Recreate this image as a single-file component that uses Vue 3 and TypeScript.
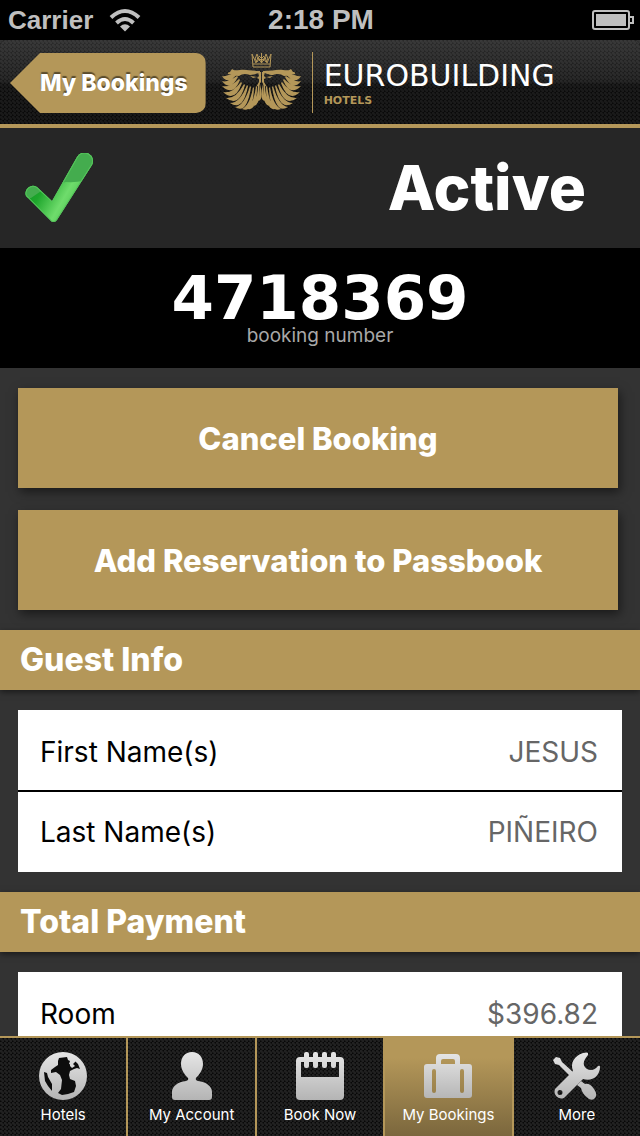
<script setup lang="ts">
interface Row {
  label: string
  value: string
}

interface Section {
  title: string
  rows: Row[]
}

interface Tab {
  id: string
  label: string
}

type Point = [number, number]

const sections: Section[] = [
  {
    title: 'Guest Info',
    rows: [
      { label: 'First Name(s)', value: 'JESUS' },
      { label: 'Last Name(s)', value: 'PIÑEIRO' },
    ],
  },
  {
    title: 'Total Payment',
    rows: [{ label: 'Room', value: '$396.82' }],
  },
]

const tabs: Tab[] = [
  { id: 'hotels', label: 'Hotels' },
  { id: 'account', label: 'My Account' },
  { id: 'book', label: 'Book Now' },
  { id: 'bookings', label: 'My Bookings' },
  { id: 'more', label: 'More' },
]

const activeTab = 'bookings'

// Each strand of the mane runs from the head through a bend to its tip.
const strands: [Point, Point, Point][] = [
  [[15, 20], [5, 29], [0, 24]],
  [[15, 24], [7, 35], [0, 29]],
  [[17, 27], [10, 40], [0, 34]],
  [[19, 30], [12, 46], [1, 40]],
  [[22, 32], [16, 51], [4, 46]],
  [[25, 33], [20, 55], [8, 51]],
  [[28, 34], [24, 58], [13, 55]],
  [[31, 35], [30, 57], [20, 57]],
  [[34, 34], [34, 54], [26, 57]],
  [[36, 32], [38, 49], [31, 54]],
  [[37, 31], [41, 43], [36, 49]],
]

const mane = strands
  .map(([r, c, t]) => `M${r[0]} ${r[1]}Q${c[0] - 2} ${c[1] - 4} ${t[0]} ${t[1]}Q${c[0] + 1} ${c[1] + 5} ${r[0] + 1} ${r[1] + 1}Z`)
  .join('')
</script>

<template>
  <div class="screen">
    <div class="status-bar">
      <div class="carrier">
        <span>Carrier</span>
        <svg width="32" height="24" viewBox="0 0 32 24" aria-hidden="true">
          <g fill="none" stroke="#bfbfbf" stroke-width="4">
            <path d="M2 9.5Q16 -3.5 30 9.5" />
            <path d="M7.500 15Q16 7 24.500 15" />
          </g>
          <path d="M11 18.500Q16 14 21 18.500L16 23.500Z" fill="#bfbfbf" />
        </svg>
      </div>
      <span>2:18 PM</span>
      <div class="power">
        <svg width="42" height="20" viewBox="0 0 42 20" aria-hidden="true">
          <rect x="1" y="1" width="36" height="18" rx="2" fill="none" stroke="#bfbfbf" stroke-width="2" />
          <rect x="4" y="4" width="30" height="12" fill="#bfbfbf" />
          <path d="M38 7h3v6h-3" fill="none" stroke="#bfbfbf" stroke-width="2" />
        </svg>
      </div>
    </div>

    <header class="nav-bar carbon">
      <button class="back" type="button">My Bookings</button>
      <svg class="crest" width="92" height="62" viewBox="0 0 92 62" aria-hidden="true">
        <defs>
          <g id="lion">
            <path :d="mane" />
            <path d="M10 17C12 19 15 18 18 18C24 17 29 19 38 19V21C34 21 33 23 28 23C23 21 20 22 17 24C13 24 10 23 8 22C5 23 5 20 8 20Z" />
            <path d="M36 20H39V30L37 33L34 35L37 30V27L35 26L37 24Z" />
            <path d="M28 24L35 25L31 26Z" />
          </g>
        </defs>
        <g fill="#b49759">
          <use href="#lion" />
          <use href="#lion" transform="translate(79 0) scale(-1 1)" />
          <rect x="90" y="0" width="1" height="61" />
        </g>
        <g fill="none" stroke="#b49759" stroke-width="1">
          <path d="M30 2L31 15H48L49 2L45 11L43 5L39.500 11L36 5L34 11Z" />
          <path d="M31 12H48M35 2L33 7L35 10L37 7ZM44 2L42 7L44 10L46 7ZM39.500 1V11M37 4L42 9M42 4L37 9" />
        </g>
      </svg>
      <div class="wordmark">
        <span class="brand">EUROBUILDING</span>
        <span class="brand-sub">HOTELS</span>
      </div>
    </header>

    <main class="content">
      <section class="state">
        <svg width="70" height="70" viewBox="0 0 70 70" aria-hidden="true">
          <defs>
            <linearGradient id="tick" x1="0" y1="0.500" x2="0.700" y2="0.900">
              <stop offset="0" stop-color="#0d9a20" />
              <stop offset="0.300" stop-color="#1ea62c" />
              <stop offset="0.700" stop-color="#6fdc6c" />
              <stop offset="1" stop-color="#4cc44f" />
            </linearGradient>
            <clipPath id="tick-shape">
              <path d="M2 43A7.500 7.500 0 0 1 13 34L28 48L53 4A8 8 0 0 1 68 12L33 67A4 4 0 0 1 26 67Z" />
            </clipPath>
          </defs>
          <g clip-path="url(#tick-shape)">
            <rect width="70" height="70" fill="url(#tick)" />
            <path d="M0 0H70V24Q60 30 42 29Q24 32 7 45L0 45Z" fill="#44ac4e" />
            <path d="M2 43A7.500 7.500 0 0 1 13 34L28 48L53 4A8 8 0 0 1 68 12L33 67A4 4 0 0 1 26 67Z" fill="none" stroke="#55c45b" stroke-width="2" />
          </g>
        </svg>
        <h1>Active</h1>
      </section>

      <section class="booking">
        <strong>4718369</strong>
        <span>booking number</span>
      </section>

      <div class="actions">
        <button type="button">Cancel Booking</button>
        <button type="button">Add Reservation to Passbook</button>
      </div>

      <section v-for="section in sections" :key="section.title" class="group">
        <h2>{{ section.title }}</h2>
        <dl>
          <div v-for="row in section.rows" :key="row.label" class="row">
            <dt>{{ row.label }}</dt>
            <dd>{{ row.value }}</dd>
          </div>
        </dl>
      </section>
    </main>

    <nav class="tab-bar carbon">
      <a
        v-for="tab in tabs"
        :key="tab.id"
        :href="'#' + tab.id"
        class="tab"
        :class="{ active: tab.id === activeTab }"
        :aria-current="tab.id === activeTab ? 'page' : undefined"
      >
        <svg width="50" height="50" viewBox="-1 -1 50 50" aria-hidden="true">
          <defs>
            <linearGradient :id="'metal-' + tab.id" gradientUnits="userSpaceOnUse" x1="0" y1="0" x2="0" y2="48">
              <stop offset="0" stop-color="#e6e6e6" />
              <stop offset="1" stop-color="#b4b4b4" />
            </linearGradient>
          </defs>
          <g :fill="`url(#metal-${tab.id})`">
            <template v-if="tab.id === 'hotels'">
              <circle cx="24" cy="24" r="24" />
              <path
                fill="#0d0d0d"
                d="M20 6L28 5L29 8L31 9L30 12L33 13L33 10L36 9L39 12L41 17L38 16L35 17L31 19L30 23L31 27L36 29L37 34L35 40L29 42L23 43L19 41L22 37L23 28L21 23L17 20L12 21L12 18L16 15L19 13L19 9ZM5 20L8 21L9 25L13 32L13 39L9 34L6 29Z"
              />
              <path d="M31 11L34 8L37 9L34 12L36 14L33 16L31 14Z" />
            </template>
            <path
              v-else-if="tab.id === 'account'"
              d="M24 0C31 0 35 5 35 12C35 18 31 23 28 26Q27 28 30 29C38 30 44 34 44 40V45Q44 48 41 48H7Q4 48 4 45V40C4 34 10 30 18 29Q21 28 20 26C17 23 13 18 13 12C13 5 17 0 24 0Z"
            />
            <template v-else-if="tab.id === 'book'">
              <path
                fill-rule="evenodd"
                d="M4 5H44Q48 5 48 9V44Q48 48 44 48H4Q0 48 0 44V9Q0 5 4 5ZM5 10V25H43V10Z"
              />
              <rect v-for="x in [8, 17, 26, 35]" :key="x" :x="x" y="0" width="5" height="16" rx="2" />
            </template>
            <path
              v-else-if="tab.id === 'bookings'"
              fill-rule="evenodd"
              d="M12 12V6Q12 2 16 2H32Q36 2 36 6V12H45Q48 12 48 15V43Q48 46 45 46H3Q0 46 0 43V15Q0 12 3 12ZM17 12H31V9Q31 7 29 7H19Q17 7 17 9ZM8 19V39Q8 41 10 41T12 39V19Q12 17 10 17T8 19ZM36 19V39Q36 41 38 41T40 39V19Q40 17 38 17T36 19Z"
            />
            <template v-else>
              <path d="M0 8L3 5L7 6L9 10L20 20L17 24L6 13L2 12Z" />
              <path d="M24 33L28 29L32 32Q37 31 41 37Q45 43 42 46Q40 49 36 47Q29 42 28 36Z" />
              <path
                fill-rule="evenodd"
                d="M35 1Q34 0 30 1C21 4 17 11 20 19L2 37A7 7 0 0 0 11 46L30 27C39 30 47 24 47 15Q47 13 45 14C42 18 38 19 34 17C30 14 29 10 35 3ZM7 38A2.500 2.500 0 1 1 7 43A2.500 2.500 0 1 1 7 38Z"
              />
            </template>
          </g>
        </svg>
        <span>{{ tab.label }}</span>
      </a>
    </nav>
  </div>
</template>

<style>
body {
  margin: 0;
  background: #333;
}
</style>

<style scoped>
.screen {
  display: flex;
  flex-direction: column;
  height: 100vh;
  background: #333;
  color: #fff;
  font-family: Inter, Roboto, sans-serif;
}

.status-bar {
  display: grid;
  grid-template-columns: 1fr auto 1fr;
  align-items: center;
  flex: none;
  height: 40px;
  padding: 0 6px 0 8px;
  background: #000;
  color: #bfbfbf;
  font: bold 28px "Liberation Sans", sans-serif;
}

.carrier {
  display: flex;
  align-items: center;
  gap: 16px;
  font-size: 26px;
}

.power {
  display: flex;
  justify-content: flex-end;
}

.carbon {
  background-color: #080808;
  background-image:
    radial-gradient(circle at 1px 1px, rgba(255, 255, 255, 0.1) 1px, transparent 2px),
    radial-gradient(circle at 3px 3px, rgba(255, 255, 255, 0.1) 1px, transparent 2px);
  background-size: 4px 4px;
}

.nav-bar {
  display: flex;
  align-items: center;
  flex: none;
  box-sizing: border-box;
  height: 88px;
  padding: 2px 10px 0;
  border-bottom: 4px solid #b49759;
  border-radius: 6px 6px 0 0;
  background-image:
    radial-gradient(circle at 1px 1px, rgba(255, 255, 255, 0.07) 1px, transparent 2px),
    radial-gradient(circle at 3px 3px, rgba(255, 255, 255, 0.07) 1px, transparent 2px),
    linear-gradient(#2a2a2a, #181818 48%, #0a0a0a 54%, #080808);
  background-size: 4px 4px, 4px 4px, 100% 100%;
}

.back {
  height: 60px;
  padding: 0 18px 0 30px;
  border: 0;
  border-radius: 0 10px 10px 0;
  background: #b49759;
  clip-path: polygon(0 50%, 30px 0, 100% 0, 100% 100%, 30px 100%);
  color: #fff;
  font: 800 23px Inter, sans-serif;
  text-shadow: 0 -2px 1px rgba(0, 0, 0, 0.5);
}

.crest {
  flex: none;
  margin: 0 10px 0 16px;
}

.wordmark {
  display: flex;
  flex-direction: column;
  font-family: "DejaVu Sans", sans-serif;
}

.brand {
  font-size: 30px;
  line-height: 36px;
}

.brand-sub {
  color: #b49759;
  font: bold 11px/14px "DejaVu Sans", sans-serif;
}

.content {
  flex: 1;
  min-height: 0;
  overflow: hidden;
}

.state {
  display: flex;
  align-items: center;
  justify-content: space-between;
  height: 120px;
  padding: 0 54px 0 24px;
  background: #262626;
}

h1 {
  margin: 0;
  font: 800 62px/76px Inter, sans-serif;
}

.booking {
  display: flex;
  flex-direction: column;
  align-items: center;
  box-sizing: border-box;
  height: 120px;
  padding-top: 14px;
  background: #000;
}

.booking strong {
  font: bold 61px/72px "DejaVu Sans", sans-serif;
}

.booking span {
  margin-top: -10px;
  color: #a8a8a8;
  font-size: 19px;
  line-height: 24px;
}

.actions {
  display: grid;
  gap: 22px;
  padding: 20px 22px 20px 18px;
}

.actions button {
  height: 100px;
  border: 0;
  background: #b49759;
  box-shadow: 2px 4px 10px rgba(0, 0, 0, 0.5);
  color: #fff;
  font: 800 31px Inter, sans-serif;
}

h2 {
  margin: 0;
  padding: 0 20px;
  background: #b49759;
  box-shadow: 0 2px 6px rgba(0, 0, 0, 0.5);
  font: 800 32px/60px Inter, sans-serif;
}

dl {
  margin: 20px 18px;
  background: #fff;
  color: #000;
  font-size: 28px;
}

.row {
  display: flex;
  align-items: center;
  justify-content: space-between;
  height: 80px;
  padding: 4px 24px 0 22px;
  box-sizing: border-box;
}

.row + .row {
  height: 82px;
  padding-top: 0;
  border-top: 2px solid #000;
}

dd {
  margin: 0;
  color: #666;
}

.tab-bar {
  display: flex;
  flex: none;
  height: 98px;
  border-top: 2px solid #b49759;
}

.tab {
  display: flex;
  flex: 1;
  flex-direction: column;
  align-items: center;
  box-sizing: border-box;
  gap: 4px;
  padding-top: 13px;
  color: #fff;
  font-size: 15px;
  line-height: 20px;
  text-decoration: none;
}

.tab + .tab {
  border-left: 2px solid #b49759;
}

.tab.active {
  background: linear-gradient(#b49759 20%, #7b673d);
}
</style>
